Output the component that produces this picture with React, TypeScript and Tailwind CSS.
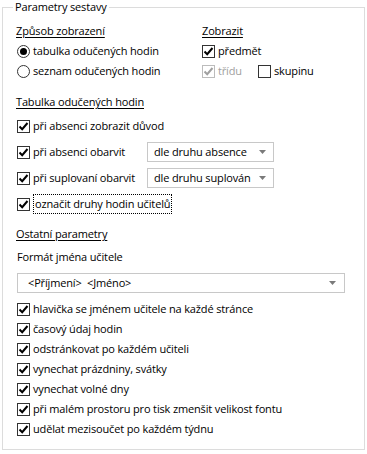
import React from "react";

// --- Small Win-style controls ---
const CheckBox = ({ checked = true, disabled = false }: { checked?: boolean; disabled?: boolean }) => (
  <span
    className={`flex h-[13px] w-[13px] shrink-0 items-center justify-center border bg-white ${
      disabled ? "border-[#bcbcbc]" : "border-[#333333]"
    }`}
  >
    {checked && (
      <svg width="11" height="11" viewBox="0 0 11 11">
        <path
          d="M1.5 5.5 L4.2 8.2 L9.5 2"
          fill="none"
          stroke={disabled ? "#a0a0a0" : "#000000"}
          strokeWidth="2"
        />
      </svg>
    )}
  </span>
);

const Radio = ({ checked = false }: { checked?: boolean }) => (
  <span className="flex h-[13px] w-[13px] shrink-0 items-center justify-center rounded-full border border-[#333333] bg-white">
    {checked && <span className="h-[7px] w-[7px] rounded-full bg-black" />}
  </span>
);

const Arrow = () => (
  <svg width="7" height="4" viewBox="0 0 7 4">
    <path d="M0 0 L7 0 L3.5 4 Z" fill="#7a7a7a" />
  </svg>
);

const Heading = ({ children, className = "" }: { children: React.ReactNode; className?: string }) => (
  <div className={`flex h-[20px] items-center ${className}`}>
    <span className="underline underline-offset-[2px]">{children}</span>
  </div>
);

const CheckRow = ({ label }: { label: string }) => (
  <div className="flex h-[20px] items-center gap-[3px]">
    <CheckBox />
    <span className="whitespace-nowrap">{label}</span>
  </div>
);

const Select = ({ value }: { value: string }) => (
  <div className="flex h-[20px] w-[127px] items-center justify-between border border-[#c8c8c8] bg-white pl-[6px] pr-[7px]">
    <span className="whitespace-nowrap">{value}</span>
    <Arrow />
  </div>
);

const otherOptions = [
  "hlavička se jménem učitele na každé stránce",
  "časový údaj hodin",
  "odstránkovat po každém učiteli",
  "vynechat prázdniny, svátky",
  "vynechat volné dny",
  "při malém prostoru pro tisk zmenšit velikost fontu",
  "udělat mezisoučet po každém týdnu",
];

export default function App() {
  return (
    <div
      className="h-[454px] w-[367px] bg-white text-[11px] leading-[14px] tracking-[-0.15px] text-[#000000]"
      style={{ fontFamily: '"Open Sans", "Noto Sans", sans-serif' }}
    >
      <fieldset className="mx-[2px] border border-[#dcdcdc] px-[10px] pb-[10px]">
        <legend className="px-[2px] leading-[14px]">Parametry sestavy</legend>

        <div className="pl-[3px]">
          {/* Top: two columns */}
          <div className="mt-[7px] flex">
            <div className="w-[186px]">
              <Heading>Způsob zobrazení</Heading>
              <div className="flex h-[20px] items-center gap-[3px] pl-[1px]">
                <Radio checked />
                <span>tabulka odučených hodin</span>
              </div>
              <div className="flex h-[20px] items-center gap-[3px] pl-[1px]">
                <Radio />
                <span>seznam odučených hodin</span>
              </div>
            </div>
            <div>
              <Heading>Zobrazit</Heading>
              <div className="flex h-[20px] items-center gap-[3px]">
                <CheckBox />
                <span>předmět</span>
              </div>
              <div className="flex h-[20px] items-center">
                <div className="flex w-[56px] items-center gap-[3px]">
                  <CheckBox disabled />
                  <span className="text-[#a0a0a0]">třídu</span>
                </div>
                <div className="flex items-center gap-[3px]">
                  <CheckBox checked={false} />
                  <span>skupinu</span>
                </div>
              </div>
            </div>
          </div>

          {/* Tabulka odučených hodin */}
          <Heading className="mt-[11px]">Tabulka odučených hodin</Heading>
          <div className="mt-[1px] pl-[1px]">
            <div className="flex h-[26px] items-center gap-[3px]">
              <CheckBox />
              <span>při absenci zobrazit důvod</span>
            </div>
            <div className="flex h-[26px] items-center">
              <div className="flex w-[130px] items-center gap-[3px]">
                <CheckBox />
                <span className="whitespace-nowrap">při absenci obarvit</span>
              </div>
              <Select value="dle druhu absence" />
            </div>
            <div className="flex h-[26px] items-center">
              <div className="flex w-[130px] items-center gap-[3px]">
                <CheckBox />
                <span className="whitespace-nowrap">při suplovaní obarvit</span>
              </div>
              <Select value="dle druhu suplován" />
            </div>
            <div className="flex h-[26px] items-center gap-[3px]">
              <CheckBox />
              <span className="border border-dotted border-black px-[1px] leading-[18px]">
                označit druhy hodin učitelů
              </span>
            </div>
          </div>

          {/* Ostatní parametry */}
          <Heading className="mt-[7px]">Ostatní parametry</Heading>
          <div className="mt-[3px] flex h-[20px] items-center pl-[1px]">Formát jména učitele</div>
          <div className="ml-[1px] mt-[6px] flex h-[20px] w-[328px] items-center justify-between border border-[#c8c8c8] pl-[10px] pr-[8px]">
            <span className="whitespace-pre">{"<Příjmení>  <Jméno>"}</span>
            <Arrow />
          </div>
          <div className="mt-[6px] pl-[1px]">
            {otherOptions.map((o) => (
              <CheckRow key={o} label={o} />
            ))}
          </div>
        </div>
      </fieldset>
    </div>
  );
}
